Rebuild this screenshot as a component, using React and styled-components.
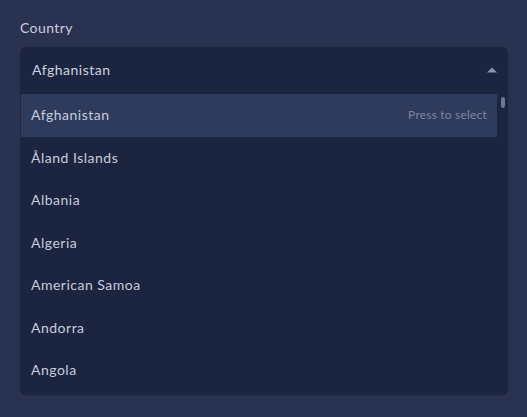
import React from "react";
import styled, { createGlobalStyle } from "styled-components";

const Global = createGlobalStyle`
  html, body { margin: 0; padding: 0; }
  body {
    background: #293251;
    font-family: "Lato", "Noto Sans", sans-serif;
    width: 527px;
    height: 417px;
    overflow: hidden;
  }
`;

const Page = styled.div`
  padding: 19px 19px 0 20px;
  display: flex;
  flex-direction: column;
`;

const Label = styled.div`
  color: #c9cfdb;
  font-size: 14px;
  line-height: 18px;
  height: 18px;
  margin-bottom: 10px;
  letter-spacing: 0.4px;
`;

const Panel = styled.div`
  background: #1c2540;
  border-radius: 6px;
  height: 348px;
  display: flex;
  flex-direction: column;
  overflow: hidden;
  box-shadow: 0 1px 0 #232c48;
`;

const Header = styled.div`
  height: 47px;
  box-sizing: border-box;
  padding: 0 11px 2px 12px;
  display: flex;
  align-items: center;
  justify-content: space-between;
  color: #cdd2de;
  font-size: 14px;
  letter-spacing: 0.5px;
`;

const Caret = styled.svg`
  width: 10px;
  height: 6px;
  display: block;
  margin-top: 1px;
`;

const Body = styled.div`
  display: flex;
  flex: 1;
`;

const List = styled.div`
  width: 476px;
  margin-left: 1px;
  display: flex;
  flex-direction: column;
`;

const Row = styled.div`
  height: ${(p) => (p.$active ? "43px" : "42.5px")};
  box-sizing: border-box;
  padding: 0 10px 2px;
  display: flex;
  align-items: center;
  justify-content: space-between;
  background: ${(p) => (p.$active ? "#2f3b5d" : "transparent")};
  color: #c6ccd9;
  font-size: 14px;
  letter-spacing: 0.5px;
`;

const Hint = styled.span`
  color: #7c87a1;
  font-size: 12px;
  letter-spacing: 0.2px;
`;

const Track = styled.div`
  flex: 1;
  display: flex;
  justify-content: center;
  padding-top: 3px;
`;

const Thumb = styled.div`
  width: 4px;
  height: 11px;
  border-radius: 2px;
  background: #6d7894;
`;

const countries = [
  "Afghanistan",
  "Åland Islands",
  "Albania",
  "Algeria",
  "American Samoa",
  "Andorra",
  "Angola",
];

export default function App() {
  return (
    <>
      <Global />
      <Page>
        <Label>Country</Label>
        <Panel>
          <Header>
            <span>Afghanistan</span>
            <Caret viewBox="0 0 10 6">
              <path d="M0 5.5 L5 0.5 L10 5.5 Z" fill="#8a95b0" />
            </Caret>
          </Header>
          <Body>
            <List>
              {countries.map((c, i) => (
                <Row key={c} $active={i === 0}>
                  <span>{c}</span>
                  {i === 0 && <Hint>Press to select</Hint>}
                </Row>
              ))}
            </List>
            <Track>
              <Thumb />
            </Track>
          </Body>
        </Panel>
      </Page>
    </>
  );
}
